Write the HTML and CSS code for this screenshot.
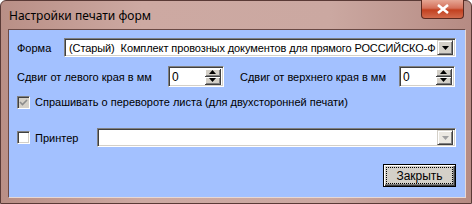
FILE: index.html
```html
<!DOCTYPE html>
<html>
<head>
<meta charset="utf-8">
<link rel="stylesheet" href="styles.css">
</head>
<body>
<div class="window">
  <div class="titlebar">
    <span class="title">Настройки печати форм</span>
    <div class="close"><svg width="14" height="10" viewBox="0 0 14 10"><path d="M2 1 L12 9 M12 1 L2 9" stroke="#fff" stroke-width="2.6" fill="none"/></svg></div>
  </div>
  <div class="client">
    <div class="row r1">
      <span class="lbl w-forma">Форма</span>
      <div class="combo wide">
        <span class="ctext tight">(Старый)&nbsp; Комплект провозных документов для прямого РОССИЙСКО-Ф</span>
        <span class="dbtn"><svg width="7" height="4" viewBox="0 0 7 4"><path d="M0 0H7L3.5 4Z" fill="#000"/></svg></span>
      </div>
    </div>
    <div class="row r2">
      <span class="lbl w-left">Сдвиг от левого края в мм</span>
      <div class="spin">
        <span class="stext">0</span>
        <span class="sbtns">
          <span class="sb"><svg width="7" height="4" viewBox="0 0 7 4"><path d="M0 4H7L3.5 0Z" fill="#000"/></svg></span>
          <span class="sb"><svg width="7" height="4" viewBox="0 0 7 4"><path d="M0 0H7L3.5 4Z" fill="#000"/></svg></span>
        </span>
      </div>
      <span class="lbl w-top">Сдвиг от верхнего края в мм</span>
      <div class="spin">
        <span class="stext">0</span>
        <span class="sbtns">
          <span class="sb"><svg width="7" height="4" viewBox="0 0 7 4"><path d="M0 4H7L3.5 0Z" fill="#000"/></svg></span>
          <span class="sb"><svg width="7" height="4" viewBox="0 0 7 4"><path d="M0 0H7L3.5 4Z" fill="#000"/></svg></span>
        </span>
      </div>
    </div>
    <div class="row r3">
      <span class="cb checked"><svg width="9" height="9" viewBox="0 0 9 9"><path d="M1 4 L3.5 6.5 L8 2" stroke="#8c8c8c" stroke-width="1.6" fill="none"/></svg></span>
      <span class="lbl">Спрашивать о перевороте листа (для двухсторонней печати)</span>
    </div>
    <div class="row r4">
      <span class="cb"></span>
      <span class="lbl w-pr">Принтер</span>
      <div class="combo printer disabled">
        <span class="ctext"></span>
        <span class="dbtn"><svg width="7" height="4" viewBox="0 0 7 4"><path d="M0 0H7L3.5 4Z" fill="#a0a0a0"/></svg></span>
      </div>
    </div>
    <div class="row r5">
      <button class="btn"><span class="focus">Закрыть</span></button>
    </div>
  </div>
</div>
</body>
</html>
```
FILE: styles.css
```css
html, body { margin: 0; padding: 0; }
body { width: 472px; height: 204px; overflow: hidden; background: #fff; }
.window {
  width: 472px; height: 204px; box-sizing: border-box;
  background: linear-gradient(90deg, #b98f86 0%, #cda9a2 30%, #cba8a1 70%, #b68b83 100%);
  border: 1px solid #5a3a36;
  border-radius: 6px 6px 0 0;
  display: flex; flex-direction: column;
  padding: 0 5px 5px 7px;
  font-family: "Liberation Sans", Arial, sans-serif;
}
.titlebar {
  height: 28px; flex: none; display: flex; align-items: flex-start; position: relative;
}
.title {
  font-family: "Segoe UI", "Noto Sans", "DejaVu Sans", sans-serif;
  font-size: 12px; color: #000; margin-top: 6px; margin-left: 1px;
}
.close {
  position: absolute; right: 2px; top: -1px; width: 43px; height: 19px;
  background: linear-gradient(180deg, #e6a694 0%, #d4705a 45%, #c2401f 55%, #d26a4c 100%);
  border: 1px solid #5c2a20; border-top: none; border-radius: 0 0 4px 4px;
  display: flex; align-items: center; justify-content: center; box-sizing: border-box;
}
.client {
  flex: 1; background: #a3c1ff;
  border: 1px solid #6b4a45; border-right-color: #e8d8d4; border-bottom-color: #e8d8d4;
  display: flex; flex-direction: column;
  padding: 0 9px 0 8px;
  font-family: "Liberation Sans", Arial, sans-serif; font-size: 11px; color: #000;
}
.row { display: flex; align-items: center; }
.r1 { margin-top: 8px; height: 19px; }
.r2 { margin-top: 9px; height: 21px; }
.r3 { margin-top: 7px; height: 16px; }
.r4 { margin-top: 18px; height: 19px; }
.r5 { margin-top: 17px; justify-content: flex-end; }
.lbl { white-space: nowrap; color: #000; flex: none; }
.w-forma { width: 47px; }
.w-left { width: 151px; }
.w-top { margin-left: 16px; width: 159px; }
.w-pr { width: 62px; }
.combo {
  height: 19px; box-sizing: border-box; background: #fff; min-width: 0;
  border-top: 1px solid #808080; border-left: 1px solid #808080;
  border-right: 1px solid #fff; border-bottom: 1px solid #fff;
  box-shadow: inset 1px 1px 0 #404040, inset -1px -1px 0 #d4d0c8;
  display: flex; align-items: center;
}
.wide { flex: 1; }
.printer { flex: 1; }
.ctext { flex: 1; min-width: 0; padding-left: 4px; white-space: nowrap; overflow: hidden; }
.tight { letter-spacing: -0.1px; }
.dbtn {
  width: 16px; height: 15px; margin-right: 2px; box-sizing: border-box; flex: none;
  background: #d4d0c8;
  border-top: 1px solid #d4d0c8; border-left: 1px solid #d4d0c8;
  border-right: 1px solid #404040; border-bottom: 1px solid #404040;
  box-shadow: inset 1px 1px 0 #fff, inset -1px -1px 0 #808080;
  display: flex; align-items: center; justify-content: center;
}
.disabled .dbtn { background: #ece9e2; }
.spin {
  width: 56px; height: 21px; box-sizing: border-box; background: #fff; flex: none;
  border-top: 1px solid #808080; border-left: 1px solid #808080;
  border-right: 1px solid #fff; border-bottom: 1px solid #fff;
  box-shadow: inset 1px 1px 0 #404040, inset -1px -1px 0 #d4d0c8;
  display: flex; align-items: center;
}
.stext { flex: 1; padding-left: 3px; font-size: 12px; }
.sbtns { display: flex; flex-direction: column; margin-right: 2px; }
.sb {
  width: 16px; height: 8px; box-sizing: border-box; background: #d4d0c8;
  border-right: 1px solid #404040; border-bottom: 1px solid #404040;
  box-shadow: inset 1px 1px 0 #fff, inset -1px -1px 0 #808080;
  display: flex; align-items: center; justify-content: center;
}
.cb {
  width: 13px; height: 13px; box-sizing: border-box; background: #fff; margin-right: 5px; flex: none;
  border-top: 1px solid #808080; border-left: 1px solid #808080;
  border-right: 1px solid #fff; border-bottom: 1px solid #fff;
  box-shadow: inset 1px 1px 0 #404040, inset -1px -1px 0 #d4d0c8;
  display: flex; align-items: center; justify-content: center;
}
.cb.checked { background: #d4d0c8; }
.btn {
  width: 73px; height: 23px; padding: 2px; margin: 0;
  background: #d4d0c8; border: 1px solid #000;
  box-shadow: inset 1px 1px 0 #fff, inset -1px -1px 0 #404040, inset -2px -2px 0 #808080;
  font-family: "Liberation Sans", Arial, sans-serif; font-size: 12px; color: #000;
  display: flex; box-sizing: border-box;
}
.focus {
  flex: 1; border: 1px dotted #000; display: flex; align-items: center; justify-content: center;
}
```
